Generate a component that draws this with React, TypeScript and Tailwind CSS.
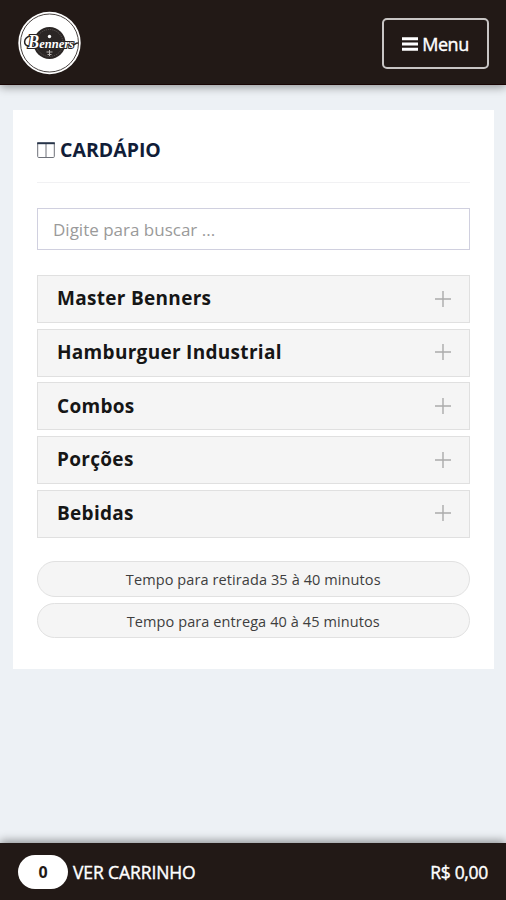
import React from "react";

const categories = ["Master Benners", "Hamburguer Industrial", "Combos", "Porções", "Bebidas"];

function Logo() {
  return (
    <svg viewBox="0 0 64 64" className="mt-[2px] size-16" role="img" aria-label="Benners">
      <circle cx="32.5" cy="32" r="31.2" fill="#fff" />
      <circle cx="32.5" cy="32" r="29" fill="none" stroke="#4a4442" strokeWidth="1" />
      <circle cx="32.5" cy="32" r="16" fill="#2b2625" />
      <circle cx="32.5" cy="32" r="13.5" fill="none" stroke="#77716f" strokeWidth="0.6" strokeDasharray="1.2 1" />
      <circle cx="32.5" cy="25.5" r="1.7" fill="#fff" />
      <path d="M29.5 41h6M32.5 39v6M30.5 43.5h4" stroke="#b5b1af" strokeWidth="1" />
      <text
        x="11" y="37" fontFamily="Liberation Serif, serif" fontStyle="italic"
        fontWeight="700" fontSize="13.5" textLength="46" lengthAdjust="spacingAndGlyphs"
        fill="#fff" stroke="#292423" strokeWidth="2.2" paintOrder="stroke"
      >
        <tspan fontSize="18">B</tspan>enners
      </text>
      <path d="M12 35c-6 0-6-8 1-10M56 34c2 0 2-2 5-2" fill="none" stroke="#292423" strokeWidth="1.5" />
    </svg>
  );
}

function Plus() {
  return (
    <svg viewBox="0 0 16 16" className="-mt-px size-4" stroke="#ababab" strokeWidth="1.4" aria-hidden="true">
      <path d="M0 8h16M8 0v16" />
    </svg>
  );
}

export default function App() {
  return (
    <div className="flex h-[900px] w-full flex-col bg-[#edf1f5] font-['Open_Sans',sans-serif]">
      <header className="z-10 flex h-[85px] shrink-0 items-center justify-between border-b border-[#180504] bg-[#221916] pr-[17px] pl-[17px] shadow-[0_2px_9px_rgba(0,0,0,0.4)]">
        <Logo />
        <button className="mt-[3px] flex h-[51px] w-[107px] items-center justify-center gap-1 rounded-[5px] border-2 border-[#c8c5c4] text-[18px] text-white">
          <svg viewBox="0 0 16 14" className="mt-px h-[14px] w-4" fill="#fff" aria-hidden="true">
            <path d="M0 .3h16v3H0zM0 5.5h16v3H0zM0 10.7h16v3H0z" />
          </svg>
          <span className="mt-px tracking-[-0.5px] [-webkit-text-stroke:0.4px_#fff]">Menu</span>
        </button>
      </header>

      <main className="grow">
        <section className="mt-[25px] mr-3 ml-[12.5px] h-[559px] bg-white pr-[24.5px] pl-[24.5px]">
          <h1 className="flex h-[73px] items-center gap-[5px] border-b border-[#f1f1f3] pt-[7px] text-[19.5px] font-bold text-[#111d38]">
            <svg viewBox="0 0 18 16" className="h-4 w-[18px]" fill="none" stroke="#6e7179" aria-hidden="true">
              <path d="M.7 1v13.5q0 1 1 1h14.6q1 0 1-1V1M9 2v13.5" />
              <path d="M.2 1.2h17.6" stroke="#273449" strokeWidth="2" />
            </svg>
            <span>CARDÁPIO</span>
          </h1>
          <input
            placeholder="Digite para buscar ..."
            className="mt-[25px] block h-[42px] w-full border-[1.5px] border-[#d0d0df] bg-white px-[15px] pt-px text-[17px] text-[#555] outline-none placeholder:text-[#9a9a9a]"
          />
          <div className="mt-[25px] flex flex-col gap-[5.7px]">
            {categories.map((name) => (
              <button
                key={name}
                className="flex h-12 w-full items-center justify-between border-[1.5px] border-[#e0e0e0] bg-[#f5f5f5] pr-[18px] pl-[19px] text-[19px] font-bold text-[#161616]"
              >
                <span className="-mt-px tracking-[0.3px]">{name}</span>
                <Plus />
              </button>
            ))}
          </div>
          <div className="mt-[23px] flex flex-col gap-[5.5px] text-center text-[14.5px] tracking-[0.1px] text-[#3e3e3e]">
            <p className="flex h-[36.5px] items-center justify-center rounded-full border border-[#e1e1e1] bg-[#f5f5f5]">
              <span className="mt-[2px]">Tempo para retirada 35 à 40 minutos</span>
            </p>
            <p className="flex h-[35px] items-center justify-center rounded-full border border-[#e1e1e1] bg-[#f5f5f5]">
              <span className="mt-[3px]">Tempo para entrega 40 à 45 minutos</span>
            </p>
          </div>
        </section>
      </main>

      <footer className="z-10 flex h-[57px] shrink-0 items-center bg-[#221916] pt-px pr-[18px] pl-[18px] text-[17.5px] text-white shadow-[0_-2px_9px_rgba(0,0,0,0.42)]">
        <span className="flex h-[34px] w-[50px] items-center justify-center rounded-full bg-white text-[16px] font-bold text-[#221916]">
          0
        </span>
        <span className="ml-[5px] tracking-[-0.1px] [-webkit-text-stroke:0.4px_#fff]">VER CARRINHO</span>
        <span className="ml-auto tracking-[-0.3px] [-webkit-text-stroke:0.4px_#fff]">R$ 0,00</span>
      </footer>
    </div>
  );
}
